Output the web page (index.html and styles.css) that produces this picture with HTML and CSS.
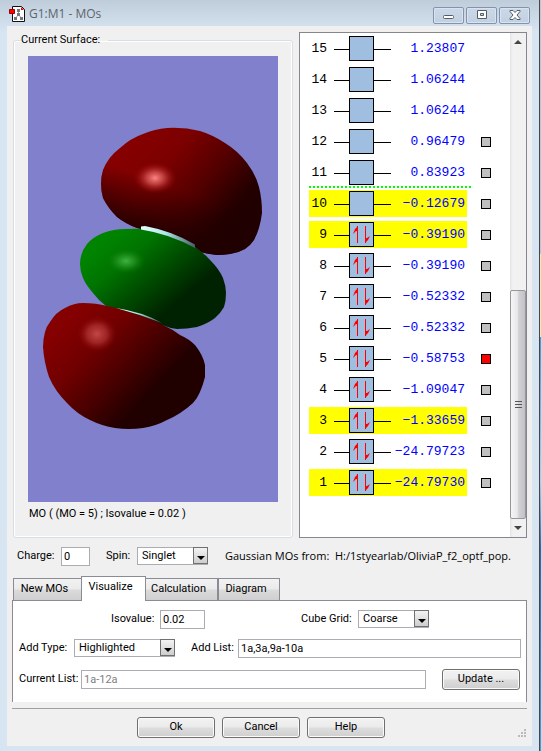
FILE: index.html
```
<!DOCTYPE html>
<html lang="en">
<head>
<meta charset="utf-8">
<title>G1:M1 - MOs</title>
<link rel="stylesheet" href="styles.css">
</head>
<body>
<div class="window">
  <header class="titlebar">
    <svg class="app-icon" width="16" height="16" viewBox="0 0 16 16">
      <path d="M3.5 .5h9l3 3v12h-12z" fill="#fff" stroke="#111"/>
      <path d="M12 1l3 3h-3z" fill="#e00"/>
      <path d="M9.500 4v4.500L6 13M9.500 8.500L13 13" fill="none" stroke="#999"/>
      <path d="M8 3h3v3H8zM8 7h3v3H8zM5 11h3v3H5zM11 11h3v3h-3z" fill="#777"/>
      <path d="M.5 3.500h5v4h-5z" fill="#f00" stroke="#900"/>
    </svg>
    <h1 class="title">G1:M1 - MOs</h1>
    <div class="caption-buttons">
      <button class="caption-button" aria-label="Minimize"><svg width="12" height="10" viewBox="0 0 12 10"><rect x=".5" y="5.500" width="10" height="3" rx="1" fill="#fff" stroke="#555c68"/></svg></button>
      <button class="caption-button" aria-label="Maximize"><svg width="12" height="10" viewBox="0 0 12 10"><path d="M1.500.5h9v8h-9zM4.500 3.500v2h3v-2z" fill="#fff" fill-rule="evenodd" stroke="#555c68"/></svg></button>
      <button class="caption-button" aria-label="Close"><svg width="12" height="10" viewBox="0 0 12 10"><path d="M1 .5h3l2 2 2-2h3v1L8 5l3 3.500v1H8l-2-2-2 2H1v-1L4 5 1 1.500z" fill="#fff" stroke="#555c68"/></svg></button>
    </div>
  </header>
  <main class="client">
    <div class="top">
      <fieldset class="surface">
        <legend>Current Surface:</legend>
        <svg class="viewport" viewBox="0 0 250 446" preserveAspectRatio="none">
          <defs>
            <linearGradient id="upper" gradientUnits="userSpaceOnUse" x1="102" y1="88" x2="202" y2="174">
              <stop offset="0" stop-color="#860000"/><stop offset=".3" stop-color="#7c0000"/><stop offset=".62" stop-color="#520000"/><stop offset=".9" stop-color="#250000"/><stop offset="1" stop-color="#200000"/>
            </linearGradient>
            <linearGradient id="shade" gradientUnits="userSpaceOnUse" x1="130" y1="126" x2="112" y2="176">
              <stop offset="0" stop-color="#200000" stop-opacity="0"/><stop offset="1" stop-color="#200000" stop-opacity=".95"/>
            </linearGradient>
            <linearGradient id="middle" gradientUnits="userSpaceOnUse" x1="80" y1="182" x2="140" y2="254">
              <stop offset="0" stop-color="#008400"/><stop offset=".3" stop-color="#007400"/><stop offset=".65" stop-color="#004a00"/><stop offset="1" stop-color="#002200"/>
            </linearGradient>
            <linearGradient id="lower" gradientUnits="userSpaceOnUse" x1="45" y1="258" x2="125" y2="335">
              <stop offset="0" stop-color="#850000"/><stop offset=".35" stop-color="#700000"/><stop offset=".7" stop-color="#460000"/><stop offset="1" stop-color="#210000"/>
            </linearGradient>
            <linearGradient id="slice" x1="0" x2="1"><stop offset="0" stop-color="#e8ffff"/><stop offset=".45" stop-color="#b0e8e8"/><stop offset="1" stop-color="#406064"/></linearGradient>
            <radialGradient id="redglow"><stop offset="0" stop-color="#ff8585"/><stop offset=".4" stop-color="#d04c4c" stop-opacity=".8"/><stop offset="1" stop-color="#900000" stop-opacity="0"/></radialGradient>
            <radialGradient id="softglow"><stop offset="0" stop-color="#c64646"/><stop offset=".5" stop-color="#b03434" stop-opacity=".7"/><stop offset="1" stop-color="#900000" stop-opacity="0"/></radialGradient>
            <radialGradient id="greenglow"><stop offset="0" stop-color="#3cb63c"/><stop offset=".4" stop-color="#279627" stop-opacity=".8"/><stop offset="1" stop-color="#007800" stop-opacity="0"/></radialGradient>
            <path id="upper-lobe" d="M73 128Q73 120 75 114Q80 101 92 92Q103 82 115 78Q127 73 139 72Q156 71 172 75Q185 79 197 87Q210 95 219 107Q228 119 231 131Q234 143 234 157Q232 173 226 184Q222 190 217 193Q210 197 202 198Q195 199 189 199Q180 198 172 196L167 191L150 181L109 172Q98 168 89 161Q80 152 75 142Q73 135 73 128z"/>
          </defs>
          <rect width="250" height="446" fill="#8080cc"/>
          <use href="#upper-lobe" fill="url(#upper)"/>
          <use href="#upper-lobe" fill="url(#shade)"/>
          <path d="M52 208Q52 197 59 188Q65 181 75 177Q86 173 97 173Q112 172 125 174Q138 176 149 181Q159 186 167 191Q176 197 183 205Q191 213 195 222Q198 230 198 237Q198 245 196 251Q192 258 187 262Q179 268 169 271Q159 273 149 273Q141 272 134 269L78 250Q71 245 65 237Q58 229 55 222Q52 215 52 208z" fill="url(#middle)"/>
          <path d="M15 291Q15 283 17 276Q18 271 22 266Q28 256 37 252Q46 247 55 247Q68 247 79 250Q95 253 109 258Q123 262 135 269Q144 273 152 279Q161 283 167 289Q175 299 177 309V321Q175 329 172 336Q169 343 165 347Q153 358 139 364Q128 370 115 372Q101 374 87 372Q74 370 62 364Q49 358 39 347Q27 335 21 321Q16 306 15 291z" fill="url(#lower)"/>
          <path d="M113 170.500L117 170Q144 175 167 188.500V192Q142 178 113 173.500z" fill="url(#slice)"/>
          <path d="M88 252Q115 256 134 267Q111 258 88 252z" fill="url(#slice)"/>
          <ellipse cx="127" cy="122" rx="22" ry="16" fill="url(#redglow)"/>
          <ellipse cx="98" cy="205" rx="20" ry="13" fill="url(#greenglow)"/>
          <ellipse cx="69" cy="278" rx="20" ry="18" fill="url(#softglow)"/>
        </svg>
        <p class="surface-caption">MO ( (MO = 5) ; Isovalue = 0.02 )</p>
      </fieldset>
      <section class="orbitals" aria-label="Orbitals">
        <table class="levels"><tbody id="levels"></tbody></table>
        <div class="scrollbar">
          <button class="scroll-arrow" aria-label="Scroll up"><svg width="8" height="4" viewBox="0 0 8 4"><path d="M4 0l4 4H0z" fill="#444"/></svg></button>
          <div class="thumb"><svg width="7" height="9" viewBox="0 0 7 9"><path d="M0 1.500h7M0 4.500h7M0 7.500h7" stroke="#555"/></svg></div>
          <button class="scroll-arrow" aria-label="Scroll down"><svg width="8" height="4" viewBox="0 0 8 4"><path d="M0 0h8L4 4z" fill="#444"/></svg></button>
        </div>
      </section>
    </div>
    <div class="row state">
      <label for="charge">Charge:</label>
      <input class="field charge" id="charge" value="0">
      <label class="next" for="spin">Spin:</label>
      <span class="select short"><select id="spin"><option>Singlet</option></select><svg class="drop" width="15" height="17" viewBox="0 0 15 17"><use href="#drop-shape"/></svg></span>
      <p class="source">Gaussian MOs from:&nbsp; H:/1styearlab/OliviaP_f2_optf_pop.</p>
    </div>
    <nav class="tabs">
      <button class="tab wide">New MOs</button>
      <button class="tab active">Visualize</button>
      <button class="tab calc">Calculation</button>
      <button class="tab last">Diagram</button>
    </nav>
    <section class="panel">
      <div class="row first">
        <label class="iso-label" for="iso">Isovalue:</label>
        <input class="field iso" id="iso" value="0.02">
        <label class="grid-label" for="grid">Cube Grid:</label>
        <span class="select short"><select id="grid"><option>Coarse</option></select><svg class="drop" width="15" height="17" viewBox="0 0 15 17"><use href="#drop-shape"/></svg></span>
      </div>
      <div class="row">
        <label class="type-label" for="type">Add Type:</label>
        <span class="select long"><select id="type"><option>Highlighted</option></select><svg class="drop" width="15" height="17" viewBox="0 0 15 17"><use href="#drop-shape"/></svg></span>
        <label class="next add-label" for="add">Add List:</label>
        <input class="field grow" id="add" value="1a,3a,9a-10a">
      </div>
      <div class="row third">
        <label class="list-label" for="current">Current List:</label>
        <input class="field grow" id="current" value="1a-12a" disabled>
        <button class="push update">Update ...</button>
      </div>
    </section>
    <footer class="footer">
      <button class="push">Ok</button>
      <button class="push">Cancel</button>
      <button class="push">Help</button>
      <svg class="grip" width="9" height="9" viewBox="0 0 9 9"><path d="M7 0h2v2H7zM7 3h2v2H7zM7 6h2v2H7zM4 3h2v2H4zM4 6h2v2H4zM1 6h2v2H1z" fill="#bbb"/></svg>
    </footer>
  </main>
</div>
<svg class="shapes" width="0" height="0">
  <defs>
    <linearGradient id="drop-fill" x1="0" y1="0" x2="0" y2="1"><stop offset="0" stop-color="#f4f4f4"/><stop offset="1" stop-color="#ccc"/></linearGradient>
    <g id="drop-shape"><rect x=".5" y=".5" width="14" height="16" fill="url(#drop-fill)" stroke="#707070"/><path d="M4 9h8L8 13z" fill="#000"/></g>
  </defs>
</svg>
<script src="script.js"></script>
</body>
</html>
```
FILE: styles.css
```
* { box-sizing: border-box; }
body {
  margin: 0;
  background: linear-gradient(#bcc6d0 254px, #f5e9a8 254px, #f5e9a8 337px, #28a8e0 337px, #8fdcf4 480px, #0878c0 548px, #20b0e8);
  font: 11px/16px Roboto, "Liberation Sans", Arial, sans-serif;
  color: #000;
}
button, input, select { font: inherit; color: inherit; margin: 0; }
p, h1 { margin: 0; }

.window {
  display: flex;
  flex-direction: column;
  min-height: 100vh;
  margin-right: 1px;
  padding: 0 7px 5px;
  border-right: 1px solid #404850;
  background: linear-gradient(#bfcddb, #d7e5f2 32px);
}
.titlebar { display: flex; height: 26px; align-items: center; padding: 2px 2px 0 2px; }
.title { margin-left: 4px; font: 12px/16px "Open Sans", "Noto Sans", sans-serif; color: #5c646c; }
.caption-buttons { display: flex; gap: 2px; margin-left: auto; margin-top: 2px; }
.caption-button {
  display: flex;
  align-items: center;
  justify-content: center;
  width: 31px;
  height: 17px;
  padding: 0;
  border: 1px solid #8493ab;
  border-radius: 2px;
  background: linear-gradient(#cbd8e6, #c1d0e1);
  box-shadow: inset 0 0 0 1px #d9e4f0;
}

.client { flex: 1; padding: 6px 5px 0; background: #f0f0f0; }
.top { display: flex; gap: 6px; }
.surface {
  flex: 1;
  min-width: 0;
  margin: 0 0 0 1px;
  padding: 8px 14px 12px;
  border: 1px solid #d5dfe5;
  border-radius: 3px;
  box-shadow: inset 0 0 0 1px #fff;
}
.surface legend { margin-left: -7px; padding: 0 8px 0 0; line-height: 16px; }
.viewport { display: block; width: 100%; height: 446px; }
.surface-caption { padding-top: 4px; padding-left: 1px; }

.orbitals {
  display: flex;
  width: 228px;
  height: 506px;
  border: 1px solid #828790;
  background: #fff;
}
.levels { align-self: flex-start; border-collapse: collapse; margin-left: 9px; font: 13px/27px "Liberation Mono", monospace; }
.levels td { height: 31px; padding: 0; background: center / 100% 27px no-repeat; }
.levels .chosen td:not(.mark) { background-image: linear-gradient(#ff0, #ff0); }
.levels .number { width: 25px; padding-right: 7px; text-align: right; }
.levels .orbital svg { display: block; }
.levels .energy { width: 76px; padding-right: 2px; color: #00f; text-align: right; white-space: nowrap; }
.levels .mark { width: 24px; padding-left: 14px; }
.levels .gap { background: repeating-linear-gradient(90deg, #0f0 0 2px, #fff 2px 4px) left bottom / 162px 2px no-repeat; }
.marker { display: block; appearance: none; width: 10px; height: 10px; margin: 0; border: 1px solid #000; background: #c0c0c0; }
.marker:checked { background: #f00; }
.scrollbar { display: flex; flex-direction: column; width: 16px; margin-left: auto; background: linear-gradient(90deg, #e5e5e5, #f1f1f1 3px); }
.scroll-arrow { display: flex; align-items: center; justify-content: center; height: 18px; padding: 0; border: 0; background: none; }
.thumb {
  display: flex;
  align-items: center;
  justify-content: center;
  height: 229px;
  margin-top: auto;
  border: 1px solid #979797;
  border-radius: 2px;
  background: linear-gradient(90deg, #f5f5f5, #e8e8eb 45%, #d2d2d6 55%, #c2c2c6);
}

.row { display: flex; align-items: center; gap: 6px; height: 20px; }
.row label { white-space: nowrap; }
.state { margin: 8px 6px 0 5px; }
.state label:first-child { width: 38px; }
.next { width: 25px; margin-left: 10px; }
.add-label { width: 41px; }
.field { min-width: 0; height: 19px; padding: 0 2px; border: 1px solid #abadb3; background: #fff; }
.field:disabled { color: #808080; }
.charge { width: 29px; }
.iso { width: 45px; }
.grow { flex: 1; }
.select { position: relative; height: 18px; flex: none; }
.select select { display: block; appearance: none; width: 100%; height: 18px; padding: 0 16px 2px 4px; border: 1px solid #abadb3; border-radius: 0; background: #fff; }
.drop { position: absolute; top: 0; right: 0; pointer-events: none; }
.short { width: 71px; }
.long { width: 101px; }
.source { flex: 1; margin-left: 11px; white-space: nowrap; font: 11px/16px "Open Sans", "Noto Sans", sans-serif; }

.tabs { display: flex; align-items: flex-end; height: 24px; margin-top: 10px; padding-left: 1px; }
.tab { height: 22px; width: 62px; padding: 0 6px 1px 0; border: 1px solid #898c95; border-bottom: 0; background: linear-gradient(#f2f2f2, #ebebeb 45%, #dadada 55%, #cfcfcf); }
.tab.wide { width: 69px; }
.tab.calc { width: 73px; }
.tab.active { position: relative; height: 25px; width: 65px; padding-bottom: 5px; margin: 0 -1px -1px; background: #fff; }
.panel { padding: 8px 5px 13px 6px; border: 1px solid #898c95; border-bottom: 0; background: #fff; }
.panel .row + .row { margin-top: 9px; }
.panel .row + .third { margin-top: 11px; }
.iso-label { width: 43px; margin-left: 92px; }
.grid-label { width: 51px; margin-left: 90px; }
.type-label { width: 49px; }
.list-label { width: 56px; }
.push {
  width: 78px;
  height: 21px;
  padding: 0 0 1px;
  border: 1px solid #707070;
  border-radius: 3px;
  background: linear-gradient(#f2f2f2, #ebebeb 48%, #dddddd 52%, #cfcfcf);
  box-shadow: inset 0 0 0 1px #fbfbfb;
}
.update { margin-left: 10px; margin-right: 1px; }
.footer { position: relative; display: flex; justify-content: center; gap: 7px; margin-top: 6px; padding: 8px 17px 7px 0; border-top: 1px solid #a0a0a0; }
.grip { position: absolute; right: 1px; bottom: 7px; }
.shapes { position: absolute; }
```
FILE: script.js
```
const levels = [
  [15, "1.23807"], [14, "1.06244"], [13, "1.06244"], [12, "0.96479"], [11, "0.83923"],
  [10, "−0.12679"], [9, "−0.39190"], [8, "−0.39190"], [7, "−0.52332"], [6, "−0.52332"],
  [5, "−0.58753"], [4, "−1.09047"], [3, "−1.33659"], [2, "−24.79723"], [1, "−24.79730"]
];
const chosen = [1, 3, 9, 10];
const electrons = `<path d="M8.5 4v17M16.5 4v17" stroke="#f00"/>
  <path d="M9 4v5H7L4 12 6 7z M16 21v-5h2l3-2-2 4z" fill="#f00"/>`;

document.getElementById("levels").innerHTML = levels.map(([n, energy]) => `
  <tr class="${chosen.includes(n) ? "chosen" : ""} ${n === 11 ? "gap" : ""}">
    <td class="number">${n}</td>
    <td class="orbital"><svg width="57" height="25" viewBox="0 0 57 25">
      <path d="M0 13.5h57" stroke="#000"/>
      <rect x="15.5" y=".5" width="24" height="24" fill="#a0bee0" stroke="#000"/>
      <g transform="translate(15)">${n < 10 ? electrons : ""}</g>
    </svg></td>
    <td class="energy">${energy}</td>
    <td class="mark">${n < 13 ? `<input class="marker" type="checkbox" aria-label="Orbital ${n}" ${n === 5 ? "checked" : ""}>` : ""}</td>
  </tr>`).join("");
```
